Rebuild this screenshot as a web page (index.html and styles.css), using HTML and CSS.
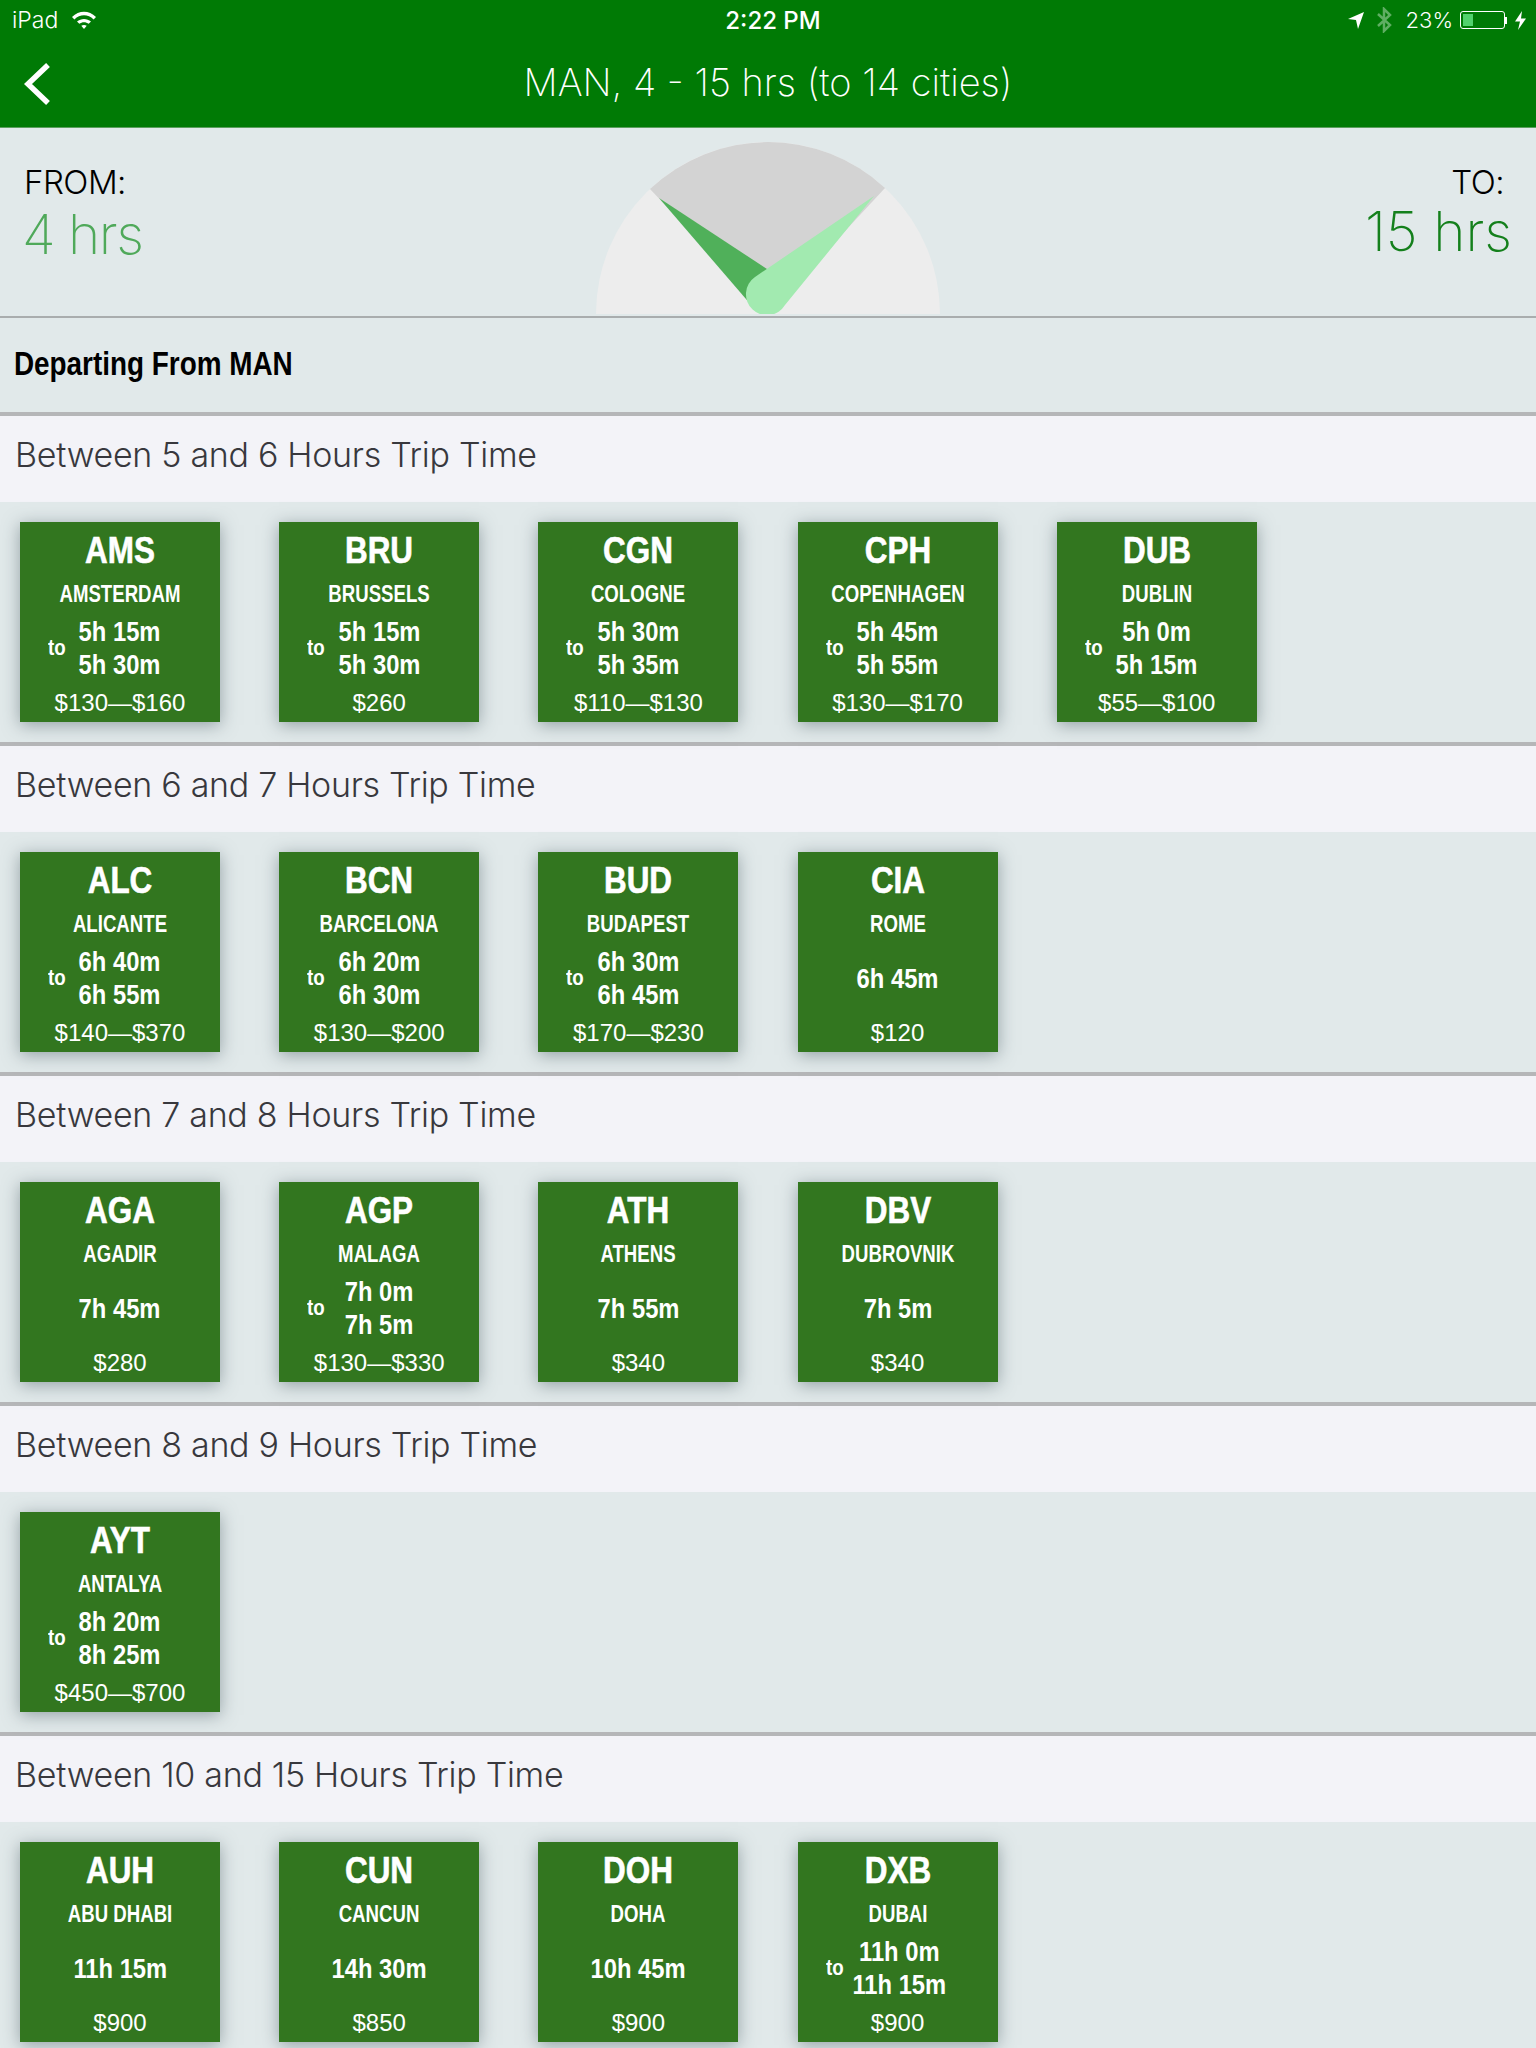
FILE: index.html
```html
<!DOCTYPE html>
<html lang="en">
<head>
    <meta charset="UTF-8">
    <title>MAN, 4 - 15 hrs</title>
    <link rel="stylesheet" href="styles.css">
</head>
<body>
    <div class="top-bar">
        <div class="status-bar">
            <div class="status-left">
                <span class="device">iPad</span>
                <svg class="wifi" width="26" height="20" viewBox="0 0 26 20">
                    <path d="M1 7 C8 0 18 0 25 7 L22.6 9.4 C17 4 9 4 3.4 9.4 Z" fill="#fff"/>
                    <path d="M6 11.5 C10 8 16 8 20 11.5 L17.7 13.8 C15 11.6 11 11.6 8.3 13.8 Z" fill="#fff"/>
                    <path d="M13 19 L10.3 15.8 C12 14.7 14 14.7 15.7 15.8 Z" fill="#fff"/>
                </svg>
            </div>
            <div class="status-time">2:22 PM</div>
            <div class="status-right">
                <svg class="arrow" width="16" height="18" viewBox="0 0 16 18"><path d="M16 1 L10 18 L8 9 L0 8 Z" fill="#fff"/></svg>
                <svg class="bt" width="16" height="26" viewBox="0 0 16 26"><path d="M2 7 L14 18 L8 24 L8 2 L14 8 L2 19" fill="none" stroke="#5fae63" stroke-width="2.5"/></svg>
                <span class="battery-pct">23%</span>
                <div class="battery"><div class="battery-fill"></div></div>
                <div class="battery-tip"></div>
                <svg width="11" height="19" viewBox="0 0 11 19"><path d="M7 0 L0 10.500 L5 10.500 L3 19 L11 7.500 L6 7.500 Z" fill="#fff"/></svg>
            </div>
        </div>
        <div class="nav-bar">
            <svg class="back" width="28" height="46" viewBox="0 0 28 46"><path d="M25 4 L5 23 L25 42" fill="none" stroke="#fff" stroke-width="5.500"/></svg>
            <div class="nav-title">MAN, 4 - 15 hrs (to 14 cities)</div>
        </div>
    </div>

    <div class="range">
        <div class="range-from">
            <div class="range-label">FROM:</div>
            <div class="range-value light">4 hrs</div>
        </div>
        <svg class="gauge" width="344" height="172" viewBox="596 142 344 172">
            <circle cx="768" cy="314" r="172" fill="#ededed"/>
            <path d="M768 314 L650 189 A172 172 0 0 1 885 188 Z" fill="#d3d3d3"/>
            <path d="M659 198 L767 269 L770 300 L752 306 Z" fill="#50b05a"/>
            <path d="M874 196 L785 305 A21 21 0 1 1 755 277 Z" fill="#a2eab0"/>
        </svg>
        <div class="range-to">
            <div class="range-label">TO:</div>
            <div class="range-value dark">15 hrs</div>
        </div>
    </div>

    <div class="departing">Departing From MAN</div>

    <div class="trip-head">Between 5 and 6 Hours Trip Time</div>
    <div class="trip-row">
        <div class="city"><div class="code">AMS</div><div class="name">AMSTERDAM</div><div class="times"><span class="to">to</span><div class="hours"><div>5h 15m</div><div>5h 30m</div></div></div><div class="price">$130—$160</div></div>
        <div class="city"><div class="code">BRU</div><div class="name">BRUSSELS</div><div class="times"><span class="to">to</span><div class="hours"><div>5h 15m</div><div>5h 30m</div></div></div><div class="price">$260</div></div>
        <div class="city"><div class="code">CGN</div><div class="name">COLOGNE</div><div class="times"><span class="to">to</span><div class="hours"><div>5h 30m</div><div>5h 35m</div></div></div><div class="price">$110—$130</div></div>
        <div class="city"><div class="code">CPH</div><div class="name">COPENHAGEN</div><div class="times"><span class="to">to</span><div class="hours"><div>5h 45m</div><div>5h 55m</div></div></div><div class="price">$130—$170</div></div>
        <div class="city"><div class="code">DUB</div><div class="name">DUBLIN</div><div class="times"><span class="to">to</span><div class="hours"><div>5h 0m</div><div>5h 15m</div></div></div><div class="price">$55—$100</div></div>
    </div>

    <div class="trip-head">Between 6 and 7 Hours Trip Time</div>
    <div class="trip-row">
        <div class="city"><div class="code">ALC</div><div class="name">ALICANTE</div><div class="times"><span class="to">to</span><div class="hours"><div>6h 40m</div><div>6h 55m</div></div></div><div class="price">$140—$370</div></div>
        <div class="city"><div class="code">BCN</div><div class="name">BARCELONA</div><div class="times"><span class="to">to</span><div class="hours"><div>6h 20m</div><div>6h 30m</div></div></div><div class="price">$130—$200</div></div>
        <div class="city"><div class="code">BUD</div><div class="name">BUDAPEST</div><div class="times"><span class="to">to</span><div class="hours"><div>6h 30m</div><div>6h 45m</div></div></div><div class="price">$170—$230</div></div>
        <div class="city"><div class="code">CIA</div><div class="name">ROME</div><div class="times"><span></span><div class="hours"><div>6h 45m</div></div></div><div class="price">$120</div></div>
    </div>

    <div class="trip-head">Between 7 and 8 Hours Trip Time</div>
    <div class="trip-row">
        <div class="city"><div class="code">AGA</div><div class="name">AGADIR</div><div class="times"><span></span><div class="hours"><div>7h 45m</div></div></div><div class="price">$280</div></div>
        <div class="city"><div class="code">AGP</div><div class="name">MALAGA</div><div class="times"><span class="to">to</span><div class="hours"><div>7h 0m</div><div>7h 5m</div></div></div><div class="price">$130—$330</div></div>
        <div class="city"><div class="code">ATH</div><div class="name">ATHENS</div><div class="times"><span></span><div class="hours"><div>7h 55m</div></div></div><div class="price">$340</div></div>
        <div class="city"><div class="code">DBV</div><div class="name">DUBROVNIK</div><div class="times"><span></span><div class="hours"><div>7h 5m</div></div></div><div class="price">$340</div></div>
    </div>

    <div class="trip-head">Between 8 and 9 Hours Trip Time</div>
    <div class="trip-row">
        <div class="city"><div class="code">AYT</div><div class="name">ANTALYA</div><div class="times"><span class="to">to</span><div class="hours"><div>8h 20m</div><div>8h 25m</div></div></div><div class="price">$450—$700</div></div>
    </div>

    <div class="trip-head">Between 10 and 15 Hours Trip Time</div>
    <div class="trip-row">
        <div class="city"><div class="code">AUH</div><div class="name">ABU DHABI</div><div class="times"><span></span><div class="hours"><div>11h 15m</div></div></div><div class="price">$900</div></div>
        <div class="city"><div class="code">CUN</div><div class="name">CANCUN</div><div class="times"><span></span><div class="hours"><div>14h 30m</div></div></div><div class="price">$850</div></div>
        <div class="city"><div class="code">DOH</div><div class="name">DOHA</div><div class="times"><span></span><div class="hours"><div>10h 45m</div></div></div><div class="price">$900</div></div>
        <div class="city"><div class="code">DXB</div><div class="name">DUBAI</div><div class="times"><span class="to">to</span><div class="hours"><div>11h 0m</div><div>11h 15m</div></div></div><div class="price">$900</div></div>
    </div>
</body>
</html>
```

FILE: styles.css
```css
html, body {
    margin: 0;
    height: 2048px;
    overflow: hidden;
}

body {
    background-color: #e1e9ea;
    font-family: "Liberation Sans", sans-serif;
    color: #000;
}

.top-bar {
    height: 128px;
    background-color: #007a05;
    color: #fff;
    border-bottom: 1px solid #5c9f5f;
    box-sizing: border-box;
}

.status-bar {
    height: 40px;
    display: grid;
    grid-template-columns: 1fr auto 1fr;
    align-items: center;
    padding: 0 10px 0 12px;
    font-family: Inter, sans-serif;
    font-size: 22px;
}

.status-left {
    display: flex;
    align-items: center;
    gap: 13px;
    font-weight: 300;
}

.device {
    font-size: 23px;
}

.status-time {
    padding-left: 8px;
    font-size: 24px;
    font-weight: 500;
}

.status-right {
    display: flex;
    align-items: center;
    justify-content: flex-end;
    font-weight: 300;
}

.bt {
    margin: 0 14px 0 12px;
}

.battery {
    width: 45px;
    height: 18px;
    margin-left: 7px;
    border: 1px solid #fff;
    border-radius: 3px;
    box-sizing: border-box;
    padding: 2px;
}

.battery-fill {
    width: 10px;
    height: 100%;
    background-color: #52d16c;
}

.battery-tip {
    width: 2px;
    height: 7px;
    margin-right: 8px;
    background-color: #fff;
}

.nav-bar {
    height: 84px;
    display: flex;
    align-items: center;
    justify-content: center;
    position: relative;
}

.back {
    position: absolute;
    left: 23px;
    top: 21px;
}

.nav-title {
    font-family: Inter, sans-serif;
    font-weight: 200;
    font-size: 38px;
}

.range {
    height: 188px;
    display: grid;
    grid-template-columns: 1fr 344px 1fr;
    align-items: end;
    padding: 0 24px;
    border-bottom: 2px solid #a9adae;
}

.gauge {
    display: block;
    margin-bottom: 2px;
}

.range-from, .range-to {
    align-self: start;
    padding-top: 34px;
}

.range-to {
    text-align: right;
}

.range-to .range-label {
    padding-right: 8px;
}

.range-label {
    font-family: Inter, sans-serif;
    font-weight: 300;
    font-size: 33px;
    letter-spacing: -0.5px;
    line-height: 40px;
}

.range-value {
    font-family: Inter, sans-serif;
    font-weight: 150;
    font-size: 55px;
    line-height: 64px;
}

.range-value.light {
    color: #4fa95a;
    margin-left: -2px;
    letter-spacing: -1.5px;
}

.range-value.dark {
    color: #14801c;
    margin-top: -3px;
}

.departing {
    height: 94px;
    box-sizing: border-box;
    padding: 26px 0 0 17px;
    font-weight: 700;
    font-size: 34px;
    line-height: 38px;
    transform: scaleX(0.82);
    transform-origin: left;
}

.trip-head {
    height: 90px;
    box-sizing: border-box;
    padding: 18px 0 0 15px;
    background-color: #f3f3f8;
    border-top: 4px solid #b5b6b8;
    font-family: Inter, sans-serif;
    font-weight: 300;
    font-size: 34px;
    letter-spacing: -0.3px;
    line-height: 42px;
    color: #38383d;
}

.trip-row {
    height: 240px;
    box-sizing: border-box;
    display: flex;
    gap: 59.2px;
    padding: 20px;
}

.city {
    width: 200px;
    height: 200px;
    flex: none;
    display: grid;
    grid-template-rows: 44px 42px 68px 39px;
    padding-top: 7px;
    box-sizing: border-box;
    background-color: #32761f;
    color: #fff;
    text-align: center;
    box-shadow: 0 3px 16px rgba(70, 90, 95, 0.5);
}

.code, .name, .price {
    display: flex;
    align-items: center;
    justify-content: center;
}

.code {
    font-weight: 700;
    font-size: 37px;
    -webkit-text-stroke: 0.6px #fff;
    transform: scaleX(0.85);
}

.name {
    font-weight: 700;
    font-size: 23px;
    transform: scaleX(0.81);
}

.times {
    display: grid;
    grid-template-columns: 1fr auto 1fr;
    align-items: center;
}

.to {
    justify-self: start;
    margin: -2px 0 0 28px;
    font-weight: 700;
    font-size: 22px;
    transform: scaleX(0.85);
    transform-origin: left;
}

.hours {
    font-weight: 700;
    font-size: 27px;
    line-height: 33px;
    transform: scaleX(0.88);
}

.price {
    font-size: 24px;
}
```
